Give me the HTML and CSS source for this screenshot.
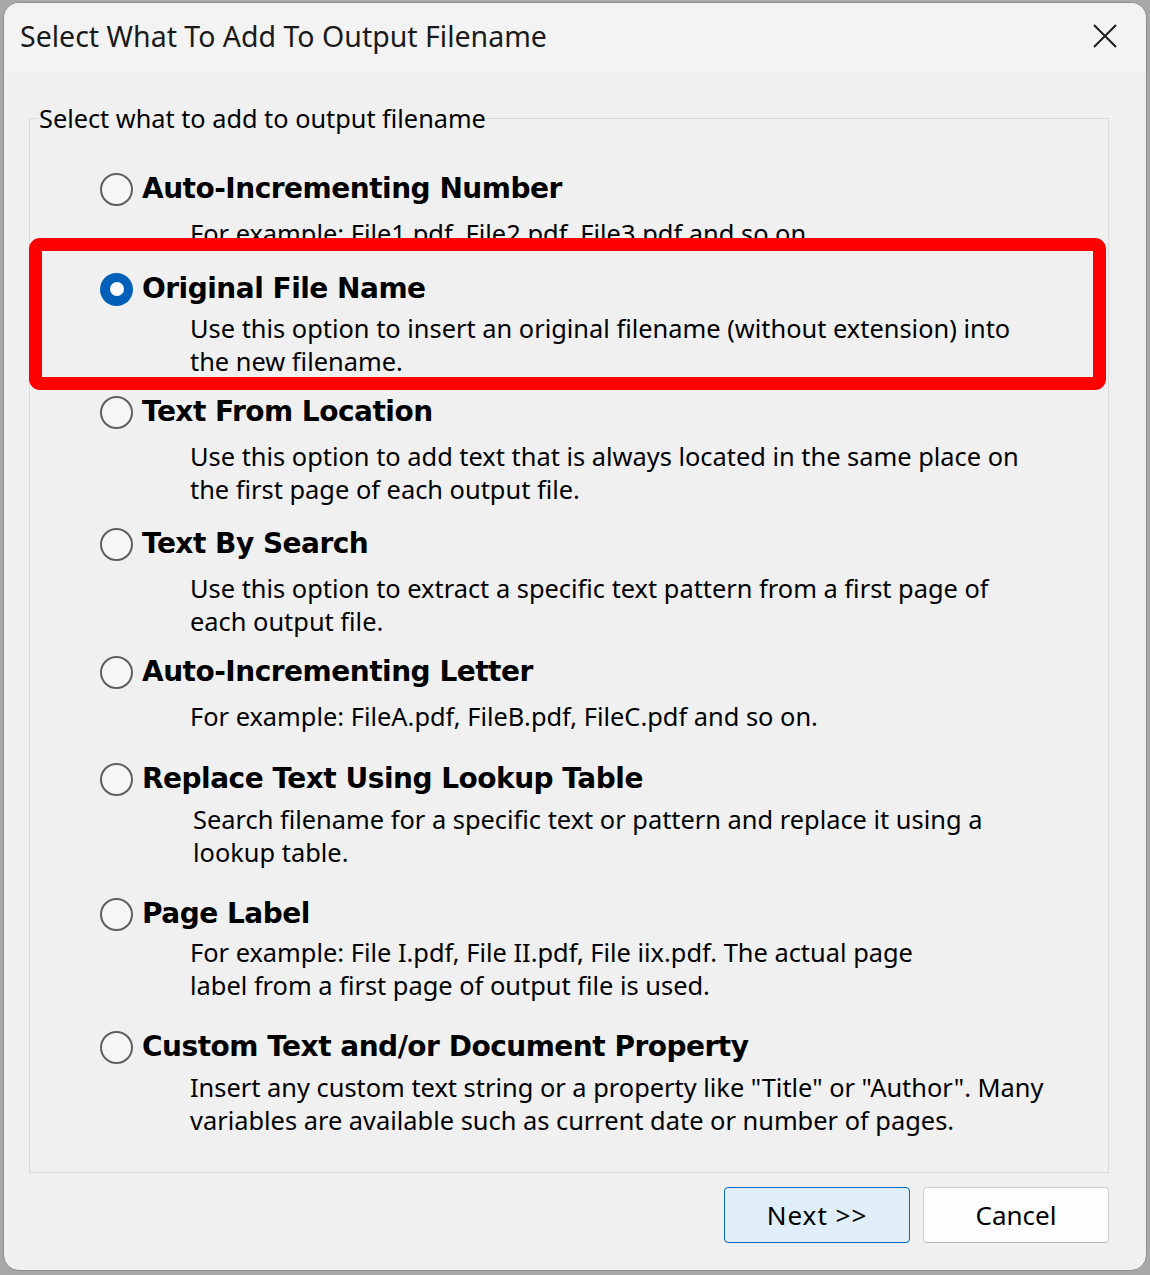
FILE: index.html
```html
<!DOCTYPE html>
<html lang="en">
<head>
<meta charset="utf-8">
<title>Select What To Add To Output Filename</title>
<link rel="stylesheet" href="styles.css">
</head>
<body>
<div class="window">
  <div class="titlebar">
    <span class="title">Select What To Add To Output Filename</span>
    <span class="close" aria-label="Close">
      <svg width="24" height="24" viewBox="0 0 24 24"><path d="M1 1 L23 23 M23 1 L1 23" stroke="#1b1b1b" stroke-width="2" fill="none"/></svg>
    </span>
  </div>
  <div class="content">
    <fieldset class="group">
      <legend class="group-label">Select what to add to output filename</legend>

      <div class="opt opt-1">
        <div class="opt-head"><span class="radio"></span><span class="opt-title">Auto-Incrementing Number</span></div>
        <p class="opt-desc">For example: File1.pdf, File2.pdf, File3.pdf and so on.</p>
      </div>

      <div class="opt opt-2">
        <div class="opt-head"><span class="radio checked"></span><span class="opt-title">Original File Name</span></div>
        <p class="opt-desc">Use this option to insert an original filename (without extension) into<br>the new filename.</p>
      </div>

      <div class="opt opt-3">
        <div class="opt-head"><span class="radio"></span><span class="opt-title">Text From Location</span></div>
        <p class="opt-desc">Use this option to add text that is always located in the same place on<br>the first page of each output file.</p>
      </div>

      <div class="opt opt-4">
        <div class="opt-head"><span class="radio"></span><span class="opt-title">Text By Search</span></div>
        <p class="opt-desc">Use this option to extract a specific text pattern from a first page of<br>each output file.</p>
      </div>

      <div class="opt opt-5">
        <div class="opt-head"><span class="radio"></span><span class="opt-title">Auto-Incrementing Letter</span></div>
        <p class="opt-desc">For example: FileA.pdf, FileB.pdf, FileC.pdf and so on.</p>
      </div>

      <div class="opt opt-6">
        <div class="opt-head"><span class="radio"></span><span class="opt-title">Replace Text Using Lookup Table</span></div>
        <p class="opt-desc">Search filename for a specific text or pattern and replace it using a<br>lookup table.</p>
      </div>

      <div class="opt opt-7">
        <div class="opt-head"><span class="radio"></span><span class="opt-title">Page Label</span></div>
        <p class="opt-desc">For example: File I.pdf, File II.pdf, File iix.pdf. The actual page<br>label from a first page of output file is used.</p>
      </div>

      <div class="opt opt-8">
        <div class="opt-head"><span class="radio"></span><span class="opt-title">Custom Text and/or Document Property</span></div>
        <p class="opt-desc">Insert any custom text string or a property like "Title" or "Author". Many<br>variables are available such as current date or number of pages.</p>
      </div>
    </fieldset>

    <div class="buttons">
      <button class="btn btn-default">Next &gt;&gt;</button>
      <button class="btn">Cancel</button>
    </div>
  </div>
  <div class="highlight"></div>
</div>
</body>
</html>
```

FILE: styles.css
```css
* { box-sizing: border-box; }

html, body {
  margin: 0;
  padding: 0;
}

body {
  background: #a8a8a8;
  width: 1150px;
  height: 1275px;
  overflow: hidden;
  font-family: "Segoe UI", "Noto Sans", sans-serif;
  color: #000;
}

.window {
  position: relative;
  margin: 2px 3px 0 3px;
  height: 1269px;
  border: 1px solid #8c8c8c;
  border-radius: 16px;
  background: #f0f0f0;
  overflow: hidden;
  display: flex;
  flex-direction: column;
}

.titlebar {
  height: 69px;
  flex: none;
  background: #f3f3f3;
  display: flex;
  align-items: center;
  justify-content: space-between;
  padding: 0 29px 2px 16px;
}

.title {
  font-size: 28.5px;
  color: #1a1a1a;
  line-height: 1;
}

.close {
  display: flex;
  width: 24px;
  height: 24px;
  margin-bottom: 2px;
}

.content {
  flex: 1;
  padding: 0 37px 0 25px;
  display: flex;
  flex-direction: column;
}

.group {
  margin: 30px 0 0 0;
  padding: 35px 0 0 0;
  border: 1px solid #dadada;
  min-width: 0;
}

.group-label {
  margin-left: 8px;
  padding: 0 1px;
  font-size: 25.3px;
  line-height: 32px;
}

.opt {
  display: flex;
  flex-direction: column;
}

.opt-head {
  height: 40px;
  display: flex;
  align-items: center;
  padding-left: 70px;
}

.radio {
  width: 33px;
  height: 33px;
  flex: none;
  border-radius: 50%;
  border: 2px solid #5f5f5f;
  background: #f6f6f6;
  margin-right: 9px;
}

.radio.checked {
  border: none;
  background: #005fb8;
  display: flex;
  align-items: center;
  justify-content: center;
}

.radio.checked::after {
  content: "";
  width: 14px;
  height: 14px;
  border-radius: 50%;
  background: #fff;
}

.opt-title {
  font-family: "DejaVu Sans", "Verdana", sans-serif;
  font-weight: bold;
  font-size: 28px;
  letter-spacing: -0.5px;
  line-height: 40px;
  white-space: nowrap;
}

.opt-desc {
  margin: 8px 0 0 160px;
  font-size: 25.4px;
  line-height: 33px;
  white-space: nowrap;
}

.opt-1 { height: 100px; }
.opt-2 { height: 123px; }
.opt-3 { height: 132px; }
.opt-4 { height: 128px; }
.opt-5 { height: 107px; }
.opt-6 { height: 135px; }
.opt-7 { height: 133px; }
.opt-8 { height: 145px; }

.opt-2 .opt-desc { margin-top: 3px; }
.opt-6 .opt-desc { margin-top: 4px; margin-left: 163px; }
.opt-7 .opt-desc { margin-top: 2px; }
.opt-8 .opt-desc { margin-top: 4px; }

.buttons {
  margin-top: 14px;
  display: flex;
  justify-content: flex-end;
  gap: 13px;
}

.btn {
  width: 186px;
  height: 56px;
  border: 1px solid #d0d0d0;
  border-bottom-color: #b8b8b8;
  border-radius: 4px;
  background: #fdfdfd;
  font-family: "Segoe UI", "Noto Sans", sans-serif;
  font-size: 26px;
  color: #000;
  padding: 0;
}

.btn-default {
  background: #e0eef9;
  border: 1px solid #0067c0;
  letter-spacing: 1px;
}

.highlight {
  position: absolute;
  left: 25px;
  top: 235px;
  width: 1077px;
  height: 152px;
  border: 13px solid #ff0000;
  border-radius: 11px;
  pointer-events: none;
}
```
